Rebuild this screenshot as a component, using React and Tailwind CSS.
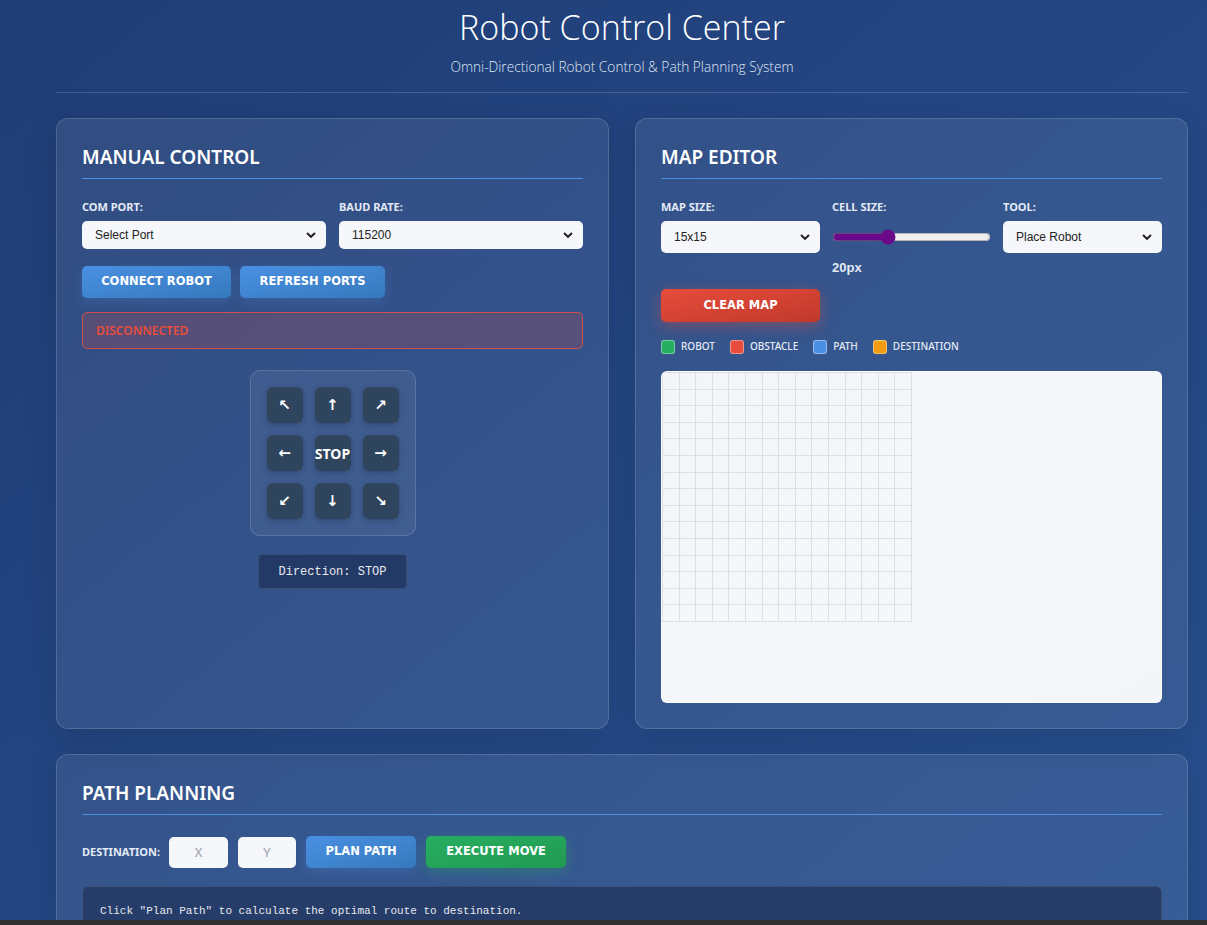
import React, { useState } from "react";

const PANEL =
  "rounded-[12px] border border-white/15 bg-white/[0.08] p-[25px] shadow-[0_8px_32px_rgba(0,0,0,0.12)]";
const HEAD =
  "font-['Noto_Sans',sans-serif] text-[19px] leading-[26px] font-semibold text-white pb-[8px] border-b border-[#4a90e2]";
const LABEL =
  "font-['Noto_Sans',sans-serif] text-[11px] leading-[14px] font-bold text-[#e3eaf6] uppercase";
const BTN =
  "font-['DejaVu_Sans',sans-serif] text-[11.5px] font-bold text-white uppercase rounded-[5px] flex items-center justify-center";

function Chevron() {
  return (
    <svg
      className="absolute right-[10px] top-1/2 -translate-y-1/2 pointer-events-none"
      width="10"
      height="7"
      viewBox="0 0 10 7"
    >
      <path d="M1 1.5 L5 5.3 L9 1.5" fill="none" stroke="#222" strokeWidth="2" />
    </svg>
  );
}

function Select({ value, options, h }) {
  return (
    <div className={`relative ${h}`}>
      <select
        defaultValue={value}
        className="appearance-none w-full h-full rounded-[5px] bg-[#f5f7fa] pl-[13px] text-[12px] text-[#222] font-['Liberation_Sans',sans-serif] outline-none"
      >
        {options.map((o) => (
          <option key={o}>{o}</option>
        ))}
      </select>
      <Chevron />
    </div>
  );
}

const PAD = [
  ["↖", "↑", "↗"],
  ["←", "STOP", "→"],
  ["↙", "↓", "↘"],
];

const LEGEND = [
  ["ROBOT", "bg-[#27ae60]"],
  ["OBSTACLE", "bg-[#e74c3c]"],
  ["PATH", "bg-[#4a90e2]"],
  ["DESTINATION", "bg-[#f39c12]"],
];

export default function App() {
  const [cell, setCell] = useState(20);
  const cells = Array.from({ length: 225 });

  return (
    <div className="min-h-screen bg-gradient-to-br from-[#1f3c75] via-[#244784] to-[#27508f] pb-[40px]">
      <div className="ml-[56px] w-[1132px]">
        {/* Header */}
        <header className="text-center border-b border-white/15 pb-[15px]">
          <h1 className="pt-[5px] font-['Open_Sans',sans-serif] font-light text-[34px] leading-[44px] text-white">
            Robot Control Center
          </h1>
          <p className="mt-[8px] font-['Open_Sans',sans-serif] font-light text-[13.7px] leading-[20px] text-[#dfe7f5]">
            Omni-Directional Robot Control &amp; Path Planning System
          </p>
        </header>

        <div className="grid grid-cols-2 gap-[26px] mt-[25px]">
          {/* Manual control */}
          <section className={PANEL}>
            <h2 className={HEAD}>MANUAL CONTROL</h2>
            <div className="grid grid-cols-2 gap-x-[13px] mt-[21px]">
              <div>
                <div className={LABEL}>COM Port:</div>
                <div className="mt-[7px]">
                  <Select value="Select Port" options={["Select Port"]} h="h-[28px]" />
                </div>
              </div>
              <div>
                <div className={LABEL}>Baud Rate:</div>
                <div className="mt-[7px]">
                  <Select value="115200" options={["9600", "57600", "115200"]} h="h-[28px]" />
                </div>
              </div>
            </div>

            <div className="flex gap-[9px] mt-[17px]">
              <button className={`${BTN} w-[149px] h-[32px] bg-gradient-to-br from-[#4a90e2] to-[#357abd] shadow-[0_4px_12px_rgba(74,144,226,0.25)]`}>
                Connect Robot
              </button>
              <button className={`${BTN} w-[145px] h-[32px] bg-gradient-to-br from-[#4a90e2] to-[#357abd] shadow-[0_4px_12px_rgba(74,144,226,0.25)]`}>
                Refresh Ports
              </button>
            </div>

            <div className="mt-[14px] h-[37px] rounded-[5px] border border-[#cf4f4c] bg-[#e74c3c]/20 flex items-center pl-[13px] font-['Noto_Sans',sans-serif] text-[12px] font-semibold text-[#e74c3c]">
              DISCONNECTED
            </div>

            <div className="flex justify-center mt-[21px]">
              <div className="grid grid-cols-3 gap-[12px] p-[16px] rounded-[10px] border border-white/15 bg-white/[0.06]">
                {PAD.flat().map((k) => (
                  <button
                    key={k}
                    className={`w-[36px] h-[36px] rounded-[6px] bg-[#2c3e50]/80 text-white shadow-[0_2px_6px_rgba(0,0,0,0.2)] flex items-center justify-center ${
                      k === "STOP"
                        ? "font-['Noto_Sans',sans-serif] text-[14px] font-bold"
                        : "font-['DejaVu_Sans',sans-serif] text-[15px] font-bold"
                    }`}
                  >
                    {k}
                  </button>
                ))}
              </div>
            </div>

            <div className="flex justify-center mt-[18px]">
              <div className="w-[149px] h-[35px] rounded-[4px] border border-white/10 bg-[#233a66] flex items-center justify-center font-['Liberation_Mono',monospace] text-[12px] text-[#e6e9ef]">
                Direction: STOP
              </div>
            </div>
          </section>

          {/* Map editor */}
          <section className={PANEL}>
            <h2 className={HEAD}>MAP EDITOR</h2>
            <div className="grid grid-cols-3 gap-x-[12px] mt-[21px]">
              <div>
                <div className={LABEL}>Map Size:</div>
                <div className="mt-[7px]">
                  <Select value="15x15" options={["10x10", "15x15", "20x20"]} h="h-[32px]" />
                </div>
              </div>
              <div>
                <div className={LABEL}>Cell Size:</div>
                <div className="mt-[7px] h-[32px] flex items-center">
                  <input
                    type="range"
                    min="10"
                    max="40"
                    value={cell}
                    onChange={(e) => setCell(+e.target.value)}
                    className="w-full accent-[#6a0a8a]"
                  />
                </div>
                <div className="mt-[7px] font-['Liberation_Sans',sans-serif] text-[13px] leading-[16px] font-bold text-[#e3eaf6]">
                  {cell}px
                </div>
              </div>
              <div>
                <div className={LABEL}>Tool:</div>
                <div className="mt-[7px]">
                  <Select value="Place Robot" options={["Place Robot", "Place Obstacle", "Set Destination"]} h="h-[32px]" />
                </div>
              </div>
            </div>

            <button className={`${BTN} mt-[13px] w-[159px] h-[33px] bg-gradient-to-br from-[#e74c3c] to-[#c0392b] shadow-[0_4px_14px_rgba(231,76,60,0.4)]`}>
              Clear Map
            </button>

            <div className="flex items-center mt-[17px] font-['Noto_Sans',sans-serif] text-[10px] font-medium text-[#e3eaf6]">
              {LEGEND.map(([name, c]) => (
                <div key={name} className="flex items-center mr-[15px]">
                  <span className={`w-[14px] h-[14px] rounded-[3px] border border-white/40 ${c}`} />
                  <span className="ml-[6px]">{name}</span>
                </div>
              ))}
            </div>

            <div className="mt-[17px] h-[332px] rounded-[6px] border border-white/70 bg-gradient-to-br from-[#f3f5f9] via-[#f6f7fb] to-[#f3f5f9] overflow-hidden">
              <div className="grid grid-cols-[repeat(15,1fr)] w-[250px] h-[250px] border-l border-t border-[#dcdfe6]">
                {cells.map((_, i) => (
                  <div key={i} className="border-r border-b border-[#dcdfe6]" />
                ))}
              </div>
            </div>
          </section>
        </div>

        {/* Path planning */}
        <section className={`${PANEL} mt-[25px]`}>
          <h2 className={HEAD}>PATH PLANNING</h2>
          <div className="flex items-center mt-[21px]">
            <span className={LABEL}>Destination:</span>
            <input
              placeholder="X"
              className="ml-[9px] w-[59px] h-[31px] rounded-[5px] bg-[#f5f7fa] text-center text-[13px] font-['Noto_Sans',sans-serif] placeholder:text-[#9aa0a8] outline-none"
            />
            <input
              placeholder="Y"
              className="ml-[10px] w-[58px] h-[31px] rounded-[5px] bg-[#f5f7fa] text-center text-[13px] font-['Noto_Sans',sans-serif] placeholder:text-[#9aa0a8] outline-none"
            />
            <button className={`${BTN} ml-[10px] w-[110px] h-[32px] bg-gradient-to-br from-[#4a90e2] to-[#357abd] shadow-[0_4px_12px_rgba(74,144,226,0.25)]`}>
              Plan Path
            </button>
            <button className={`${BTN} ml-[10px] w-[140px] h-[32px] bg-gradient-to-br from-[#27ae60] to-[#219a52] shadow-[0_4px_14px_rgba(39,174,96,0.35)]`}>
              Execute Move
            </button>
          </div>
          <div className="mt-[18px] rounded-[6px] border border-white/10 bg-[#263d69] px-[17px] pt-[16px] pb-[20px] font-['Liberation_Mono',monospace] text-[11px] text-[#e6e9ef]">
            Click "Plan Path" to calculate the optimal route to destination.
          </div>
        </section>
      </div>

      {/* browser scrollbar strip */}
      <div className="fixed bottom-0 left-0 right-0 h-[5px] bg-[#323232]" />
    </div>
  );
}
